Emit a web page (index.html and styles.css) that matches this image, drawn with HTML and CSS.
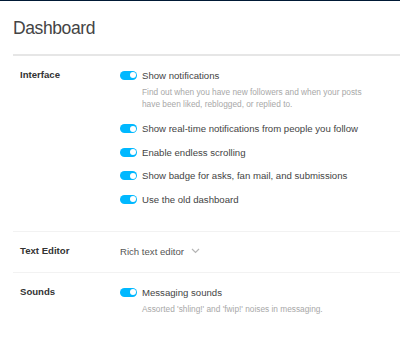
FILE: index.html
```html
<!DOCTYPE html>
<html lang="en">
<head>
  <meta charset="UTF-8">
  <title>Settings | Dashboard</title>
  <meta name="viewport" content="width=device-width, initial-scale=1.0">
  <link rel="stylesheet" href="styles.css">
</head>
<body>

<div class="topbar"></div>

<div class="settings">
  <h1 class="settings-title">Dashboard</h1>

  <div class="section section-first">
    <div class="section-label">Interface</div>
    <div class="section-body">
      <div class="option">
        <div class="option-row">
          <span class="toggle on"></span>
          <span class="option-text">Show notifications</span>
        </div>
        <div class="option-desc">Find out when you have new followers and when your posts have been liked, reblogged, or replied to.</div>
      </div>

      <div class="option">
        <div class="option-row">
          <span class="toggle on"></span>
          <span class="option-text">Show real-time notifications from people you follow</span>
        </div>
      </div>

      <div class="option">
        <div class="option-row">
          <span class="toggle on"></span>
          <span class="option-text">Enable endless scrolling</span>
        </div>
      </div>

      <div class="option">
        <div class="option-row">
          <span class="toggle on"></span>
          <span class="option-text">Show badge for asks, fan mail, and submissions</span>
        </div>
      </div>

      <div class="option">
        <div class="option-row">
          <span class="toggle on"></span>
          <span class="option-text">Use the old dashboard</span>
        </div>
      </div>
    </div>
  </div>

  <div class="section">
    <div class="section-label">Text Editor</div>
    <div class="section-body">
      <div class="select">
        Rich text editor
        <svg class="chevron" width="9" height="6" viewBox="0 0 9 6">
          <path d="M1 1 L4.5 4.5 L8 1" fill="none" stroke="#b5b5b5" stroke-width="1.2"/>
        </svg>
      </div>
    </div>
  </div>

  <div class="section">
    <div class="section-label">Sounds</div>
    <div class="section-body">
      <div class="option">
        <div class="option-row">
          <span class="toggle on"></span>
          <span class="option-text">Messaging sounds</span>
        </div>
        <div class="option-desc">Assorted 'shling!' and 'fwip!' noises in messaging.</div>
      </div>
    </div>
  </div>
</div>

</body>
</html>
```

FILE: styles.css
```css
body {
  margin: 0;
  font-family: 'Liberation Sans', Arial, sans-serif;
  background: #fff;
  color: #444;
}

.topbar {
  height: 1px;
  background-color: #001935;
}

.settings {
  padding-left: 13px;
}

.settings-title {
  margin: 0;
  padding-top: 16px;
  height: 37px;
  font-size: 17.5px;
  font-weight: normal;
  letter-spacing: -0.4px;
  line-height: 22px;
  color: #444;
  border-bottom: 2px solid #e6e6e6;
}

.section {
  display: grid;
  grid-template-columns: 107px 1fr;
  padding: 12px 0 14px;
  border-top: 1px solid #f2f2f2;
}

.section-first {
  border-top: none;
  padding-bottom: 25px;
}

.section-label {
  padding-left: 7px;
  font-size: 9.6px;
  font-weight: bold;
  line-height: 14px;
  color: #333;
}

.option + .option {
  margin-top: 9.5px;
}

.option-row {
  display: flex;
  align-items: center;
  height: 14px;
}

.toggle {
  position: relative;
  width: 17px;
  height: 9px;
  border-radius: 5px;
  background-color: #ccc;
  margin-right: 5px;
  flex-shrink: 0;
}

.toggle.on {
  background-color: #00b8ff;
}

.toggle::after {
  content: '';
  position: absolute;
  top: 1.5px;
  left: 1.5px;
  width: 6px;
  height: 6px;
  border-radius: 50%;
  background-color: #fff;
}

.toggle.on::after {
  left: 9.5px;
}

.option-text {
  font-size: 9.6px;
  color: #444;
}

.option-desc {
  margin: 4px 0 0 22px;
  padding-bottom: 2px;
  max-width: 230px;
  font-size: 8.3px;
  line-height: 12px;
  color: #a8a8a8;
}

.section:last-child .option-desc {
  padding-bottom: 0;
}

.select {
  display: flex;
  align-items: center;
  height: 14px;
  font-size: 9.6px;
  color: #555;
}

.chevron {
  margin-left: 7px;
}
```
